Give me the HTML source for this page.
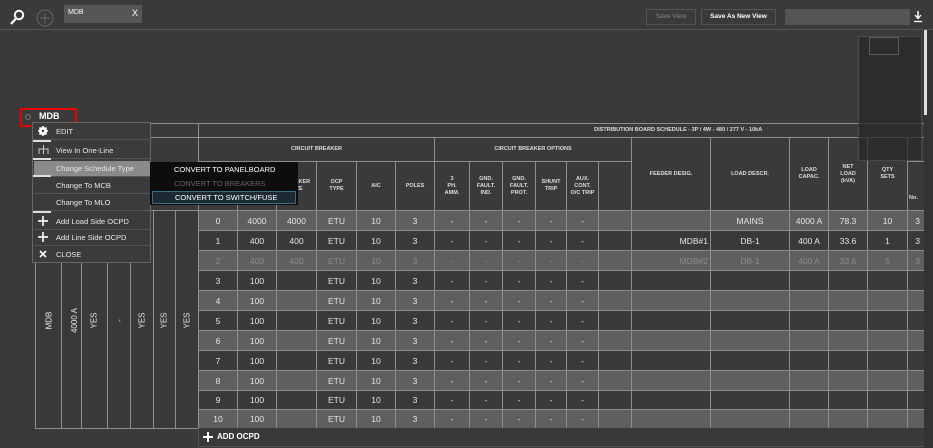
<!DOCTYPE html>
<html><head><meta charset="utf-8"><style>
*{box-sizing:border-box;margin:0;padding:0}
body{width:933px;height:448px;background:#3a3a3a;font-family:"Liberation Sans",sans-serif;color:#ddd;position:relative;overflow:hidden}
.abs{position:absolute}
table{border-collapse:collapse;table-layout:fixed;position:absolute;left:35px;top:123px;width:888px}
td{border:1px solid #8e8e8e;text-align:center;font-size:8.5px;color:#e6e6e6;overflow:hidden;white-space:nowrap;padding:0}
th{border:1px solid #8e8e8e;font-size:5.5px;font-weight:bold;color:#ddd;line-height:7px;overflow:hidden;background:#3a3a3a}
tr.l td.d{background:#5f5f5f}
tr.k td.d{background:#393939}
tr.dim td.d{color:#8c8c8c}
td.v{background:#393939}
td.v span{display:inline-block;transform:rotate(-90deg);font-size:8px;white-space:nowrap}
.menu{left:32px;top:122px;width:119px;height:141px;background:#3b3b3b;border:1px solid #666}
.mi{position:absolute;left:1px;width:116px;height:16px;font-size:7.5px;color:#e6e6e6;line-height:16px;padding-left:22px;border-bottom:1px solid #555}
.sub{left:150px;top:162px;width:148px;height:43px;background:#0d0d0d}
.sub div{font-size:7.5px;height:13px;line-height:13px;padding-left:22px;margin:1px 2px 0 2px}
</style></head><body>
<svg class="abs" style="left:9px;top:9px" width="16" height="17" viewBox="0 0 16 17"><circle cx="10" cy="6" r="4.2" fill="none" stroke="#fff" stroke-width="2"/><line x1="7" y1="9.5" x2="2" y2="15" stroke="#fff" stroke-width="2.2"/></svg>
<svg class="abs" style="left:36px;top:9px" width="18" height="18"><circle cx="9" cy="9" r="8" fill="none" stroke="#666" stroke-width="1"/><line x1="9" y1="4" x2="9" y2="14" stroke="#666"/><line x1="4" y1="9" x2="14" y2="9" stroke="#666"/></svg>
<div class="abs" style="left:64px;top:5px;width:78px;height:18px;background:#565656"></div>
<div class="abs" style="left:68px;top:9px;font-size:7px;color:#fff">MDB</div>
<div class="abs" style="left:132px;top:8px;font-size:9px;color:#fff">X</div>
<div class="abs" style="left:646px;top:9px;width:50px;height:16px;border:1px solid #555;font-size:6.5px;color:#888;text-align:center;line-height:14px">Save View</div>
<div class="abs" style="left:701px;top:9px;width:75px;height:16px;border:1px solid #555;font-size:6.5px;color:#fff;font-weight:bold;text-align:center;line-height:14px">Save As New View</div>
<div class="abs" style="left:785px;top:9px;width:125px;height:16px;background:#555"></div>
<svg class="abs" style="left:913px;top:10px" width="10" height="13"><line x1="5" y1="1" x2="5" y2="8" stroke="#fff" stroke-width="1.5"/><path d="M2 5 L5 8.5 L8 5" fill="none" stroke="#fff" stroke-width="1.3"/><line x1="1" y1="11.5" x2="9" y2="11.5" stroke="#fff" stroke-width="1.3"/></svg>
<div class="abs" style="left:0;top:29px;width:933px;height:1px;background:#555"></div>
<div class="abs" style="left:923px;top:30px;width:10px;height:418px;background:#333"></div>
<div class="abs" style="left:924px;top:30px;width:3px;height:85px;background:#ddd"></div>

<div class="abs" style="left:0;top:0;width:924px;height:448px;overflow:hidden">
<table>
<colgroup><col style="width:26px"><col style="width:20px"><col style="width:26px"><col style="width:23px"><col style="width:23px"><col style="width:22px"><col style="width:23px">
<col style="width:39px"><col style="width:39px"><col style="width:40px"><col style="width:40px"><col style="width:39px"><col style="width:39px"><col style="width:35px"><col style="width:33px"><col style="width:33px"><col style="width:31px"><col style="width:32px"><col style="width:33px"><col style="width:79px"><col style="width:79px"><col style="width:39px"><col style="width:39px"><col style="width:40px"><col style="width:20px"></colgroup>
<tr style="height:14px"><th colspan="7" style="border-bottom:1px solid #8e8e8e"></th><th colspan="18" style="text-align:right;padding-right:165px">DISTRIBUTION BOARD SCHEDULE - 3P / 4W - 480 / 277 V - 10kA</th></tr>
<tr style="height:24px"><th colspan="7" rowspan="2"></th><th colspan="6">CIRCUIT BREAKER</th><th colspan="6">CIRCUIT BREAKER OPTIONS</th><th rowspan="2">FEEDER DESIG.</th><th rowspan="2">LOAD DESCR.</th><th rowspan="2">LOAD<br>CAPAC.</th><th rowspan="2">NET<br>LOAD<br>(kVA)</th><th rowspan="2">QTY<br>SETS</th><th></th></tr>
<tr style="height:49px"><th></th><th></th><th>BREAKER<br>SIZE</th><th>OCP<br>TYPE</th><th>AIC</th><th>POLES</th><th>3<br>PH.<br>AMM.</th><th>GND.<br>FAULT.<br>IND.</th><th>GND.<br>FAULT.<br>PROT.</th><th>SHUNT<br>TRIP</th><th>AUX.<br>CONT.<br>O/C TRIP</th><th></th><th style="text-align:left;vertical-align:bottom;padding:0 0 8px 1px">No.</th></tr>
<tr class="l" style="height:20px"><td class="v" rowspan="11"><span>MDB</span></td><td class="v" rowspan="11"><span>4000 A</span></td><td class="v" rowspan="11"><span>YES</span></td><td class="v" rowspan="11"><span>-</span></td><td class="v" rowspan="11"><span>YES</span></td><td class="v" rowspan="11"><span>YES</span></td><td class="v" rowspan="11"><span>YES</span></td>
<td class="d">0</td><td class="d">4000</td><td class="d">4000</td><td class="d">ETU</td><td class="d">10</td><td class="d">3</td><td class="d">-</td><td class="d">-</td><td class="d">-</td><td class="d">-</td><td class="d">-</td><td class="d"></td><td class="d"></td><td class="d">MAINS</td><td class="d">4000 A</td><td class="d">78.3</td><td class="d">10</td><td class="d">3</td></tr>
<tr class="k" style="height:20px"><td class="d">1</td><td class="d">400</td><td class="d">400</td><td class="d">ETU</td><td class="d">10</td><td class="d">3</td><td class="d">-</td><td class="d">-</td><td class="d">-</td><td class="d">-</td><td class="d">-</td><td class="d"></td><td class="d" style="text-align:right;padding-right:2px">MDB#1</td><td class="d">DB-1</td><td class="d">400 A</td><td class="d">33.6</td><td class="d">1</td><td class="d">3</td></tr>
<tr class="l dim" style="height:20px"><td class="d">2</td><td class="d">400</td><td class="d">400</td><td class="d">ETU</td><td class="d">10</td><td class="d">3</td><td class="d">-</td><td class="d">-</td><td class="d">-</td><td class="d">-</td><td class="d">-</td><td class="d"></td><td class="d" style="text-align:right;padding-right:2px">MDB#2</td><td class="d">DB-1</td><td class="d">400 A</td><td class="d">33.6</td><td class="d">5</td><td class="d">3</td></tr>
<tr class="k" style="height:20px"><td class="d">3</td><td class="d">100</td><td class="d"></td><td class="d">ETU</td><td class="d">10</td><td class="d">3</td><td class="d">-</td><td class="d">-</td><td class="d">-</td><td class="d">-</td><td class="d">-</td><td class="d"></td><td class="d"></td><td class="d"></td><td class="d"></td><td class="d"></td><td class="d"></td><td class="d"></td></tr>
<tr class="l" style="height:20px"><td class="d">4</td><td class="d">100</td><td class="d"></td><td class="d">ETU</td><td class="d">10</td><td class="d">3</td><td class="d">-</td><td class="d">-</td><td class="d">-</td><td class="d">-</td><td class="d">-</td><td class="d"></td><td class="d"></td><td class="d"></td><td class="d"></td><td class="d"></td><td class="d"></td><td class="d"></td></tr>
<tr class="k" style="height:20px"><td class="d">5</td><td class="d">100</td><td class="d"></td><td class="d">ETU</td><td class="d">10</td><td class="d">3</td><td class="d">-</td><td class="d">-</td><td class="d">-</td><td class="d">-</td><td class="d">-</td><td class="d"></td><td class="d"></td><td class="d"></td><td class="d"></td><td class="d"></td><td class="d"></td><td class="d"></td></tr>
<tr class="l" style="height:20px"><td class="d">6</td><td class="d">100</td><td class="d"></td><td class="d">ETU</td><td class="d">10</td><td class="d">3</td><td class="d">-</td><td class="d">-</td><td class="d">-</td><td class="d">-</td><td class="d">-</td><td class="d"></td><td class="d"></td><td class="d"></td><td class="d"></td><td class="d"></td><td class="d"></td><td class="d"></td></tr>
<tr class="k" style="height:20px"><td class="d">7</td><td class="d">100</td><td class="d"></td><td class="d">ETU</td><td class="d">10</td><td class="d">3</td><td class="d">-</td><td class="d">-</td><td class="d">-</td><td class="d">-</td><td class="d">-</td><td class="d"></td><td class="d"></td><td class="d"></td><td class="d"></td><td class="d"></td><td class="d"></td><td class="d"></td></tr>
<tr class="l" style="height:20px"><td class="d">8</td><td class="d">100</td><td class="d"></td><td class="d">ETU</td><td class="d">10</td><td class="d">3</td><td class="d">-</td><td class="d">-</td><td class="d">-</td><td class="d">-</td><td class="d">-</td><td class="d"></td><td class="d"></td><td class="d"></td><td class="d"></td><td class="d"></td><td class="d"></td><td class="d"></td></tr>
<tr class="k" style="height:19px"><td class="d">9</td><td class="d">100</td><td class="d"></td><td class="d">ETU</td><td class="d">10</td><td class="d">3</td><td class="d">-</td><td class="d">-</td><td class="d">-</td><td class="d">-</td><td class="d">-</td><td class="d"></td><td class="d"></td><td class="d"></td><td class="d"></td><td class="d"></td><td class="d"></td><td class="d"></td></tr>
<tr class="l" style="height:19px"><td class="d">10</td><td class="d">100</td><td class="d"></td><td class="d">ETU</td><td class="d">10</td><td class="d">3</td><td class="d">-</td><td class="d">-</td><td class="d">-</td><td class="d">-</td><td class="d">-</td><td class="d"></td><td class="d"></td><td class="d"></td><td class="d"></td><td class="d"></td><td class="d"></td><td class="d"></td></tr>
</table>
<div class="abs" style="left:198px;top:428px;width:730px;height:19px;border:1px solid #555;border-top:none;background:#393939;font-size:8px;font-weight:bold;color:#fff;line-height:18px;padding-left:18px">ADD OCPD</div>
<div class="abs" style="left:203px;top:432px;width:10px;height:10px"><div class="abs" style="left:4px;top:0;width:2px;height:10px;background:#fff"></div><div class="abs" style="left:0;top:4px;width:10px;height:2px;background:#fff"></div></div>
</div>

<div class="abs" style="left:858px;top:36px;width:64px;height:125px;background:rgba(40,40,40,0.75);border:1px solid #4a4a4a"></div>
<div class="abs" style="left:869px;top:37px;width:30px;height:18px;border:1px solid #5a5a5a"></div>

<div class="abs" style="left:20px;top:108px;width:57px;height:19px;border:2px solid #e00"></div>
<div class="abs" style="left:25px;top:114px;width:6px;height:6px;border:1px solid #777;border-radius:50%"></div>
<div class="abs" style="left:39px;top:111px;font-size:9px;font-weight:bold;color:#fff">MDB</div>

<div class="abs menu">
<div class="mi" style="top:1px">EDIT</div>
<div class="mi" style="top:20px">View In One-Line</div>
<div class="mi" style="top:38px;background:#8a8a8a">Change Schedule Type<span style="position:absolute;right:4px;color:#a8c;font-size:6px">▸</span></div>
<div class="mi" style="top:55px">Change To MCB</div>
<div class="mi" style="top:72px">Change To MLO</div>
<div class="mi" style="top:91px">Add Load Side OCPD</div>
<div class="mi" style="top:107px">Add Line Side OCPD</div>
<div class="mi" style="top:124px;border-bottom:none">CLOSE</div>
</div>
<div class="abs" style="left:33px;top:140px;width:18px;height:2px;background:#ddd"></div>
<div class="abs" style="left:33px;top:158px;width:18px;height:2px;background:#ddd"></div>
<div class="abs" style="left:33px;top:175px;width:18px;height:2px;background:#ddd"></div>
<div class="abs" style="left:33px;top:211px;width:18px;height:2px;background:#ddd"></div>
<svg class="abs" style="left:38px;top:126px" width="10" height="10"><circle cx="5" cy="5" r="3" fill="none" stroke="#fff" stroke-width="2"/><g stroke="#fff" stroke-width="1.6"><line x1="5" y1="0" x2="5" y2="10"/><line x1="0" y1="5" x2="10" y2="5"/><line x1="1.5" y1="1.5" x2="8.5" y2="8.5"/><line x1="8.5" y1="1.5" x2="1.5" y2="8.5"/></g><circle cx="5" cy="5" r="1.2" fill="#3b3b3b"/></svg>
<svg class="abs" style="left:38px;top:145px" width="11" height="9"><g stroke="#ccc" stroke-width="1" fill="none"><line x1="5.5" y1="0" x2="5.5" y2="9"/><path d="M1 9 V4 H10 V9"/></g></svg>
<svg class="abs" style="left:38px;top:216px" width="10" height="10"><line x1="5" y1="0" x2="5" y2="10" stroke="#fff" stroke-width="1.6"/><line x1="0" y1="5" x2="10" y2="5" stroke="#fff" stroke-width="1.6"/></svg>
<svg class="abs" style="left:38px;top:232px" width="10" height="10"><line x1="5" y1="0" x2="5" y2="10" stroke="#fff" stroke-width="1.6"/><line x1="0" y1="5" x2="10" y2="5" stroke="#fff" stroke-width="1.6"/></svg>
<svg class="abs" style="left:39px;top:250px" width="8" height="8"><line x1="1" y1="1" x2="7" y2="7" stroke="#fff" stroke-width="1.6"/><line x1="7" y1="1" x2="1" y2="7" stroke="#fff" stroke-width="1.6"/></svg>

<div class="abs sub">
<div style="color:#fff">CONVERT TO PANELBOARD</div>
<div style="color:#666">CONVERT TO BREAKERS</div>
<div style="color:#fff;background:#1c2a33;border:1px solid #3a6c85;line-height:11px">CONVERT TO SWITCH/FUSE</div>
</div>
</body></html>
